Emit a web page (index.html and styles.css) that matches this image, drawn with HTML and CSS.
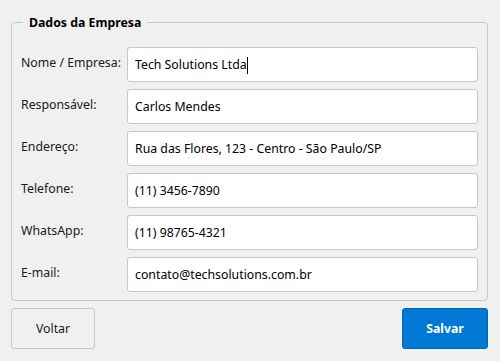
FILE: index.html
```html
<!DOCTYPE html>
<html>
<head>
    <title>Dados da Empresa</title>
    <link rel="stylesheet" href="styles.css">
</head>
<body>
    <div class="window">
        <fieldset class="group">
            <legend>Dados da Empresa</legend>
            <div class="row">
                <label>Nome / Empresa:</label>
                <div class="field">Tech Solutions Ltda<span class="caret"></span></div>
            </div>
            <div class="row">
                <label>Responsável:</label>
                <div class="field">Carlos Mendes</div>
            </div>
            <div class="row">
                <label>Endereço:</label>
                <div class="field">Rua das Flores, 123 - Centro - São Paulo/SP</div>
            </div>
            <div class="row">
                <label>Telefone:</label>
                <div class="field">(11) 3456-7890</div>
            </div>
            <div class="row">
                <label>WhatsApp:</label>
                <div class="field">(11) 98765-4321</div>
            </div>
            <div class="row">
                <label>E-mail:</label>
                <div class="field">contato@techsolutions.com.br</div>
            </div>
        </fieldset>
        <div class="actions">
            <button class="btn">Voltar</button>
            <button class="btn primary">Salvar</button>
        </div>
    </div>
</body>
</html>
```

FILE: styles.css
```css
body, html {
    margin: 0;
    padding: 0;
    background-color: #f0f0f0;
    color: #1a1a1a;
    font-family: "Noto Sans", "Open Sans", sans-serif;
    font-size: 12.3px;
}
.window {
    padding: 14px 12px 12px 11px;
}
.group {
    margin: 0;
    border: 1px solid #c8c8c8;
    border-radius: 4px;
    padding: 16px 9px 8px 9px;
}
.group legend {
    padding: 0 6px;
    margin-left: 2px;
    font-weight: bold;
    color: #000;
}
.row {
    display: grid;
    grid-template-columns: 106px 1fr;
    align-items: center;
    margin-bottom: 7px;
}
.row:last-child {
    margin-bottom: 0;
}
.row label {
    padding-bottom: 4px;
}
.field {
    height: 33px;
    line-height: 33px;
    background-color: #fff;
    border: 1px solid #c8c8c8;
    border-radius: 3px;
    padding: 0 7px;
    color: #000;
    white-space: nowrap;
}
.caret {
    display: inline-block;
    width: 1px;
    height: 17px;
    background-color: #000;
    vertical-align: middle;
}
.actions {
    display: flex;
    justify-content: space-between;
    margin-top: 7px;
}
.btn {
    width: 84px;
    height: 41px;
    border: 1px solid #c8c8c8;
    border-radius: 3px;
    background-color: #f0f0f0;
    font-family: inherit;
    font-size: 12.3px;
    color: #1a1a1a;
}
.btn.primary {
    width: 86px;
    background-color: #0078d4;
    border-color: #0067b8;
    color: #fff;
    font-weight: bold;
}
```
